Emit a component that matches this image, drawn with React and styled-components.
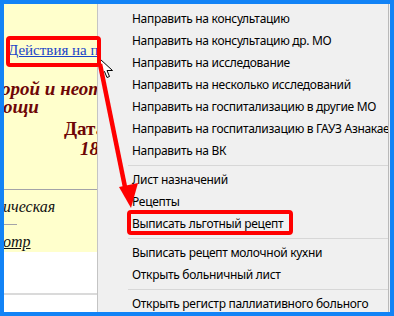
import styled, { createGlobalStyle } from "styled-components";

const GlobalStyle = createGlobalStyle`
  body {
    margin: 0;
    background: #fff;
  }
`;

const Frame = styled.div`
  position: relative;
  width: 394px;
  height: 316px;
  box-sizing: border-box;
  border: 4px solid #1283f6;
  display: flex;
  overflow: hidden;
  background: #f0f0f0;
`;

const Page = styled.div`
  width: 93px;
  flex: none;
  display: flex;
  flex-direction: column;
  overflow: hidden;
  background: #fff;
  white-space: nowrap;
  font-family: "Liberation Serif", "Times New Roman", serif;
`;

const YellowBlock = styled.div`
  height: 248px;
  flex: none;
  background: #ffffcc;
  overflow: hidden;
`;

const ActionLink = styled.a`
  display: block;
  margin-top: 37px;
  padding-left: 4px;
  font-size: 15px;
  line-height: 19px;
  color: #1a44c8;
  text-decoration: underline;
`;

const Heading = styled.div`
  margin-top: ${(p) => p.$top || 0}px;
  margin-left: ${(p) => p.$left || 0}px;
  font-size: 19px;
  line-height: 18px;
  font-weight: bold;
  font-style: ${(p) => (p.$upright ? "normal" : "italic")};
  color: #6e0606;
`;

const Rule = styled.div`
  margin-top: ${(p) => p.$top}px;
  width: ${(p) => (p.$short ? "13px" : "100%")};
  height: 1px;
  background: #a3a3a8;
`;

const Note = styled.div`
  margin-top: ${(p) => p.$top}px;
  margin-left: -1px;
  font-size: 16px;
  line-height: 18px;
  font-style: italic;
  color: #111;
  text-decoration: ${(p) => (p.$link ? "underline" : "none")};
`;

const WhiteBlock = styled.div`
  flex: 1;
  background: #fff;
  padding-top: 41px;
`;

const ThickRule = styled.div`
  height: 2px;
  background: #dadada;
`;

const Menu = styled.div`
  flex: 1;
  min-width: 0;
  padding-top: 4px;
  border-left: 1px solid #c4c4c4;
  border-right: 1px solid #b9b9b9;
  margin-right: 1px;
  background: #f0f0f0;
  font-family: "Noto Sans", "Open Sans", sans-serif;
  font-size: 12px;
  letter-spacing: -0.3px;
  color: #000;
`;

const MenuItem = styled.div`
  height: 22px;
  line-height: 22px;
  padding-left: 34px;
  white-space: nowrap;
  overflow: hidden;
`;

const Separator = styled.div`
  height: 1px;
  margin: 3px 0 3px 30px;
  background: #d7d7d7;
`;

const Overlay = styled.svg`
  position: absolute;
  top: -4px;
  left: -4px;
  width: 394px;
  height: 316px;
  pointer-events: none;
`;

const menu = [
  "Направить на консультацию",
  "Направить на консультацию др. МО",
  "Направить на исследование",
  "Направить на несколько исследований",
  "Направить на госпитализацию в другие МО",
  "Направить на госпитализацию в ГАУЗ Азнакаевская ЦРБ",
  "Направить на ВК",
  "-",
  "Лист назначений",
  "Рецепты",
  "Выписать льготный рецепт",
  "-",
  "Выписать рецепт молочной кухни",
  "Открыть больничный лист",
  "-",
  "Открыть регистр паллиативного больного",
];

export default function App() {
  return (
    <>
      <GlobalStyle />
      <Frame>
        <Page>
          <YellowBlock>
            <ActionLink>Действия на пациента</ActionLink>
            <Heading $top={20} $left={-3}>орой и неотложной</Heading>
            <Heading $left={-1}>ощи</Heading>
            <Heading $top={4} $left={60} $upright>
              Дата:
            </Heading>
            <Heading $top={2} $left={76}>
              18.05.2019
            </Heading>
            <Rule $top={31} />
            <Note $top={8}>ическая</Note>
            <Rule $top={8} $short />
            <Note $top={8} $link>
              отр
            </Note>
          </YellowBlock>
          <WhiteBlock>
            <ThickRule />
          </WhiteBlock>
        </Page>
        <Menu>
          {menu.map((item, i) =>
            item === "-" ? (
              <Separator key={i} />
            ) : (
              <MenuItem key={i}>{item}</MenuItem>
            )
          )}
        </Menu>
        <Overlay viewBox="0 0 394 316">
          <path
            d="M100.5 59.5 L100.5 75.5 L104.5 71.5 L107 77.5 L109.5 76.5 L107 70.5 L112.5 70.5 Z"
            fill="#fff"
            stroke="#000"
            strokeWidth="1"
            strokeLinejoin="miter"
          />
          <rect x="8" y="38" width="91" height="27" rx="2" fill="none" stroke="#ff0000" strokeWidth="4" />
          <rect x="129" y="212" width="162" height="21" rx="2" fill="none" stroke="#ff0000" strokeWidth="4" />
          <line x1="100" y1="64" x2="126" y2="192" stroke="#ff0000" strokeWidth="4.5" />
          <polygon points="119,187 138,183 131,208" fill="#ff0000" />
        </Overlay>
      </Frame>
    </>
  );
}
